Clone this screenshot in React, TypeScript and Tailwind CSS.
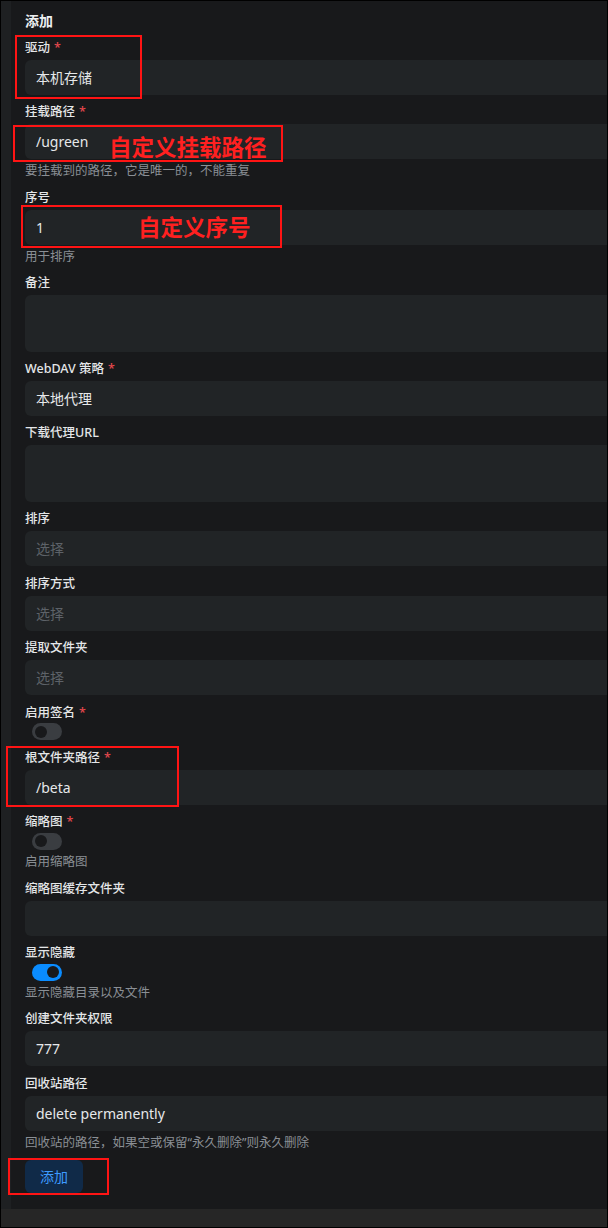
import { ReactNode } from 'react'

type FieldProps = {
  label: string
  required?: boolean
  help?: string
  children: ReactNode
}

const Field = ({ label, required, help, children }: FieldProps) => (
  <div className="flex flex-col">
    <div className="h-[20px] leading-[20px] text-[12.5px] font-medium text-[#e4e6e8]">
      {label}
      {required && <span className="ml-[4px] text-[#e5484d]">*</span>}
    </div>
    {children}
    {help && (
      <div className="h-[21px] pt-[3px] leading-[18px] text-[12.5px] text-[#8a8f95]">
        {help}
      </div>
    )}
  </div>
)

const Input = ({ value, placeholder }: { value?: string; placeholder?: string }) => (
  <div className="mt-[2px] h-[35px] w-[600px] rounded-[6px] bg-[#212426] pl-[11px] flex items-center text-[14px]">
    {value ? (
      <span className="text-[#e6e8ea]">{value}</span>
    ) : (
      <span className="text-[#5d6268]">{placeholder}</span>
    )}
  </div>
)

const TextArea = () => (
  <div className="mt-[2px] h-[56.5px] w-[600px] rounded-[6px] bg-[#212426]" />
)

const Switch = ({ on }: { on?: boolean }) => (
  <div className="h-[18px] flex items-center">
    <div
      className={
        on
          ? 'ml-[7px] h-[17px] w-[30px] rounded-full bg-[#0a8cff] flex items-center justify-end pr-[3px]'
          : 'ml-[7px] h-[17px] w-[30px] rounded-full bg-[#3a3d41] flex items-center pl-[3px]'
      }
    >
      <div className="h-[12px] w-[12px] rounded-full bg-[#18191b]" />
    </div>
  </div>
)

const Mark = ({ className }: { className: string }) => (
  <div className={`absolute border-2 border-[#ff1414] ${className}`} />
)

const App = () => {
  return (
    <div
      className="relative w-[608px] h-[1228px] border border-black bg-[#18191b] flex flex-col overflow-hidden"
      style={{ fontFamily: '"Noto Sans", "Noto Sans CJK SC", sans-serif' }}
    >
      <div className="flex flex-1 min-h-0">
        <div className="w-[10px] bg-[#1e2022]" />
        <div className="flex-1 overflow-hidden pl-[14px] pt-[10px]">
          <div className="h-[20px] leading-[20px] text-[14px] font-bold text-[#eceef0]">
            添加
          </div>

          <div className="mt-[7px] flex flex-col gap-[7.4px]">
            <Field label="驱动" required>
              <Input value="本机存储" />
            </Field>
            <Field label="挂载路径" required help="要挂载到的路径，它是唯一的，不能重复">
              <Input value="/ugreen" />
            </Field>
            <Field label="序号" help="用于排序">
              <Input value="1" />
            </Field>
            <Field label="备注">
              <TextArea />
            </Field>
            <Field label="WebDAV 策略" required>
              <Input value="本地代理" />
            </Field>
            <Field label="下载代理URL">
              <TextArea />
            </Field>
            <Field label="排序">
              <Input placeholder="选择" />
            </Field>
            <Field label="排序方式">
              <Input placeholder="选择" />
            </Field>
            <Field label="提取文件夹">
              <Input placeholder="选择" />
            </Field>
            <Field label="启用签名" required>
              <Switch />
            </Field>
            <Field label="根文件夹路径" required>
              <Input value="/beta" />
            </Field>
            <Field label="缩略图" required help="启用缩略图">
              <Switch />
            </Field>
            <Field label="缩略图缓存文件夹">
              <Input />
            </Field>
            <Field label="显示隐藏" help="显示隐藏目录以及文件">
              <Switch on />
            </Field>
            <Field label="创建文件夹权限">
              <Input value="777" />
            </Field>
            <Field label="回收站路径" help="回收站的路径，如果空或保留“永久删除”则永久删除">
              <Input value="delete permanently" />
            </Field>
          </div>

          <button className="mt-[8px] h-[33px] w-[58px] rounded-[6px] bg-[#102a48] text-[14px] text-[#3d9bff]">
            添加
          </button>
        </div>
      </div>
      <div className="h-[18px] bg-[#262626]" />

      <Mark className="left-[14px] top-[34px] w-[127px] h-[64px]" />
      <Mark className="left-[12px] top-[124px] w-[270px] h-[37px]" />
      <Mark className="left-[20px] top-[204px] w-[261px] h-[43px]" />
      <Mark className="left-[5px] top-[745px] w-[173px] h-[61px]" />
      <Mark className="left-[7px] top-[1157px] w-[101px] h-[37px]" />

      <div className="absolute left-[108px] top-[132px] leading-[30px] text-[22.5px] font-bold text-[#ff2020]">
        自定义挂载路径
      </div>
      <div className="absolute left-[137px] top-[212px] leading-[30px] text-[22.5px] font-bold text-[#ff2020]">
        自定义序号
      </div>
    </div>
  )
}

export default App
